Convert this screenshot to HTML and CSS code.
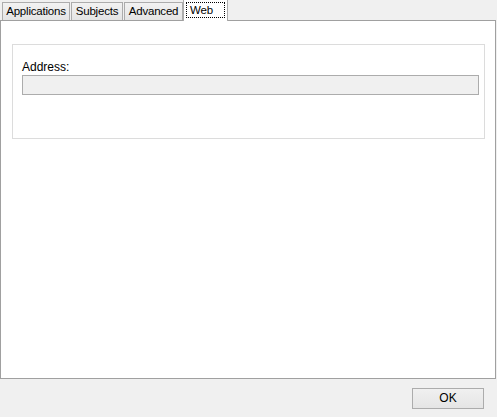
FILE: index.html
```html
<!DOCTYPE html>
<html>
<head>
<meta charset="utf-8">
<link rel="stylesheet" href="styles.css">
</head>
<body>
<div class="window">
  <div class="tabs">
    <div class="tab tab-apps">Applications</div>
    <div class="tab tab-subj">Subjects</div>
    <div class="tab tab-adv">Advanced</div>
    <div class="tab active"><span class="focus">Web</span></div>
  </div>
  <div class="panel">
    <div class="group">
      <div class="label">Address:</div>
      <div class="input"></div>
    </div>
  </div>
  <div class="footer">
    <div class="btn">OK</div>
  </div>
</div>
</body>
</html>
```
FILE: styles.css
```css
html, body {
  margin: 0;
  padding: 0;
  background: #f0f0f0;
  font-family: "Liberation Sans", Arial, sans-serif;
  font-size: 11px;
  color: #000;
}
.window {
  width: 497px;
  height: 417px;
  display: flex;
  flex-direction: column;
}
.tabs {
  display: flex;
  align-items: flex-end;
  height: 20px;
  padding-left: 2px;
  position: relative;
  z-index: 1;
}
.tab {
  box-sizing: border-box;
  height: 18px;
  border: 1px solid #acacac;
  border-bottom: none;
  margin-right: 1px;
  background: linear-gradient(#f2f2f2, #e4e4e4);
  line-height: 17px;
  text-align: center;
  white-space: nowrap;
  font-size: 11.5px;
  letter-spacing: -0.2px;
}
.tab-apps { width: 68px; }
.tab-subj { width: 52px; }
.tab-adv { width: 59px; }
.tab.active {
  width: 45px;
  height: 22px;
  margin-left: -1px;
  margin-right: 0;
  margin-bottom: -1px;
  padding: 2px 2px 0 2px;
  background: #fff;
  text-align: left;
}
.focus {
  display: block;
  border: 1px dotted #000;
  padding: 0 0 0 3px;
  line-height: 14px;
  height: 14px;
}
.panel {
  box-sizing: border-box;
  width: 496px;
  height: 359px;
  background: #fff;
  border: 1px solid #a0a0a0;
  padding: 23px 10px 0 11px;
}
.group {
  box-sizing: border-box;
  width: 473px;
  height: 95px;
  border: 1px solid #dcdcdc;
  padding: 15px 5px 0 9px;
}
.label {
  font-size: 12px;
  line-height: 14px;
  height: 14px;
}
.input {
  box-sizing: border-box;
  height: 20px;
  margin-top: 1px;
  width: 457px;
  background: #f0f0f0;
  border: 1px solid #acacac;
}
.footer {
  flex: 1;
  display: flex;
  justify-content: flex-end;
  padding: 9px 13px 0 0;
}
.btn {
  box-sizing: border-box;
  width: 72px;
  height: 21px;
  border: 1px solid #acacac;
  background: linear-gradient(#f0f0f0, #e5e5e5);
  text-align: center;
  line-height: 19px;
  font-size: 12px;
}
```
